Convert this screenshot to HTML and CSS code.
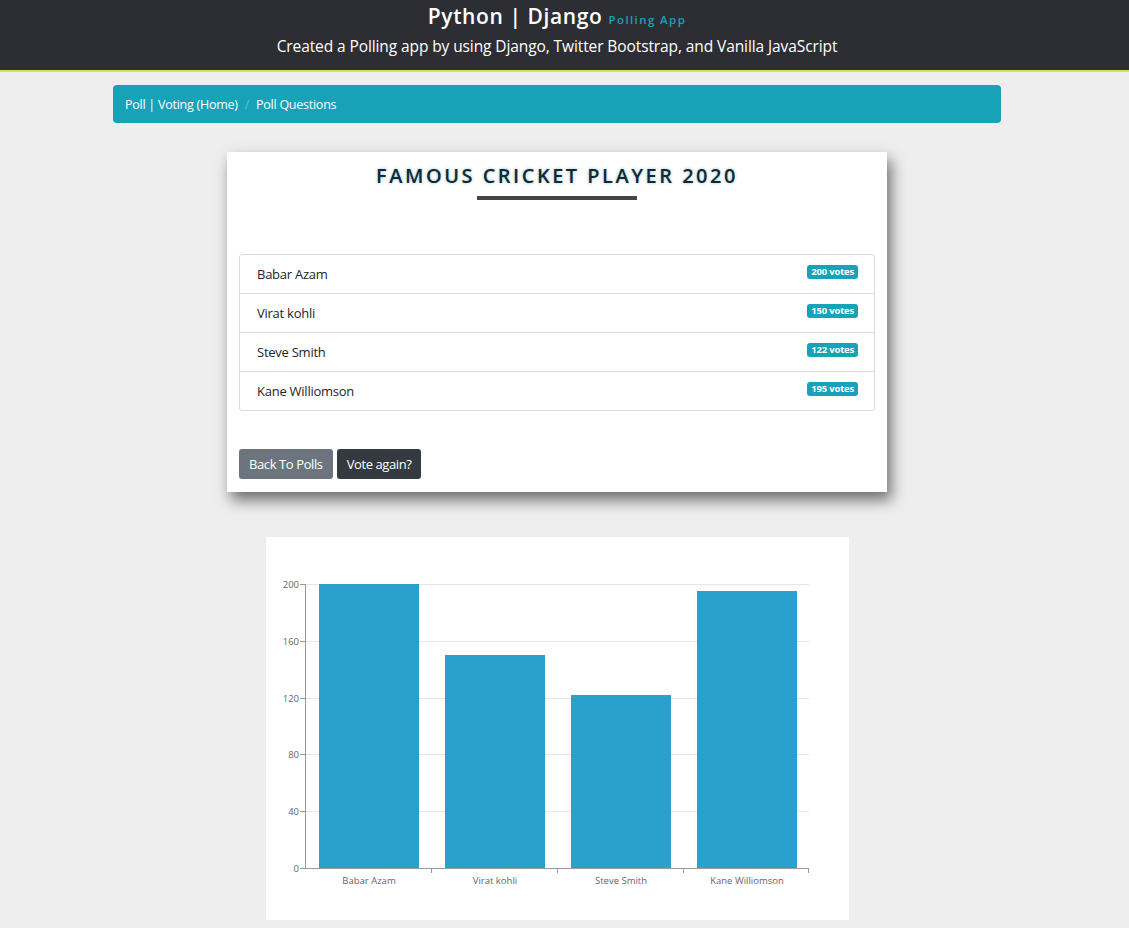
FILE: index.html
```html
<!DOCTYPE html>
<html>
<head>
<meta charset="utf-8">
<title>Polling App</title>
<link rel="stylesheet" href="styles.css">
</head>
<body>
<header class="site-header">
  <h1 class="brand">Python | Django <span class="brand-sub">Polling App</span></h1>
  <p class="tagline">Created a Polling app by using Django, Twitter Bootstrap, and Vanilla JavaScript</p>
</header>

<div class="page">
<main class="container">
  <nav class="breadcrumb">
    <a class="crumb" href="#">Poll | Voting (Home)</a>
    <span class="sep">/</span>
    <a class="crumb" href="#">Poll Questions</a>
  </nav>

  <section class="poll-card">
    <h2 class="poll-title">Famous Cricket Player 2020</h2>
    <div class="title-bar"></div>
    <ul class="list-group">
      <li class="list-item"><span>Babar Azam</span><span class="badge">200 votes</span></li>
      <li class="list-item"><span>Virat kohli</span><span class="badge">150 votes</span></li>
      <li class="list-item"><span>Steve Smith</span><span class="badge">122 votes</span></li>
      <li class="list-item"><span>Kane Williomson</span><span class="badge">195 votes</span></li>
    </ul>
    <div class="actions">
      <a class="btn btn-secondary" href="#">Back To Polls</a>
      <a class="btn btn-dark" href="#">Vote again?</a>
    </div>
  </section>

  <section class="chart-box">
    <svg class="chart" width="583" height="383" viewBox="0 0 583 383">
      <g class="grid">
        <line x1="39" y1="47.5" x2="543" y2="47.5"/>
        <line x1="39" y1="104.5" x2="543" y2="104.5"/>
        <line x1="39" y1="161.5" x2="543" y2="161.5"/>
        <line x1="39" y1="217.5" x2="543" y2="217.5"/>
        <line x1="39" y1="274.5" x2="543" y2="274.5"/>
      </g>
      <g class="bars">
        <rect x="53" y="47" width="100" height="284"/>
        <rect x="179" y="118" width="100" height="213"/>
        <rect x="305" y="158" width="100" height="173"/>
        <rect x="431" y="54" width="100" height="277"/>
      </g>
      <g class="axis">
        <line x1="39.5" y1="47" x2="39.5" y2="331"/>
        <line x1="39" y1="331.5" x2="543" y2="331.5"/>
        <line x1="34" y1="47.5" x2="39" y2="47.5"/>
        <line x1="34" y1="104.5" x2="39" y2="104.5"/>
        <line x1="34" y1="161.5" x2="39" y2="161.5"/>
        <line x1="34" y1="217.5" x2="39" y2="217.5"/>
        <line x1="34" y1="274.5" x2="39" y2="274.5"/>
        <line x1="34" y1="331.5" x2="39" y2="331.5"/>
        <line x1="165.5" y1="331" x2="165.5" y2="336"/>
        <line x1="291.5" y1="331" x2="291.5" y2="336"/>
        <line x1="417.5" y1="331" x2="417.5" y2="336"/>
        <line x1="542.5" y1="331" x2="542.5" y2="336"/>
      </g>
      <g class="ylabels">
        <text x="33" y="51">200</text>
        <text x="33" y="108">160</text>
        <text x="33" y="165">120</text>
        <text x="33" y="221">80</text>
        <text x="33" y="278">40</text>
        <text x="33" y="335">0</text>
      </g>
      <g class="xlabels">
        <text x="103" y="347">Babar Azam</text>
        <text x="229" y="347">Virat kohli</text>
        <text x="355" y="347">Steve Smith</text>
        <text x="481" y="347">Kane Williomson</text>
      </g>
    </svg>
  </section>
</main>
</div>
</body>
</html>
```

FILE: styles.css
```css
* { box-sizing: border-box; }

body {
  margin: 0;
  background: #eeeeee;
  font-family: "Open Sans", "Noto Sans", sans-serif;
  color: #212529;
}

.page {
  padding-right: 15px;
}

.site-header {
  background: #2d2e33;
  border-bottom: 2px solid #d8e24a;
  height: 72px;
  padding: 2px 15px 0 0;
  text-align: center;
  color: #fff;
}

.brand {
  margin: 0;
  font-size: 21px;
  font-weight: 600;
  letter-spacing: 0.6px;
  line-height: 28px;
}

.brand-sub {
  font-size: 11.5px;
  color: #17a2b8;
  letter-spacing: 1.4px;
  font-weight: 600;
}

.tagline {
  margin: 1px 0 0;
  font-size: 15.5px;
  line-height: 22px;
  letter-spacing: -0.1px;
}

.container {
  width: 888px;
  margin: 13px auto 0;
  display: flex;
  flex-direction: column;
  align-items: center;
}

.breadcrumb {
  align-self: stretch;
  height: 38px;
  background: #17a2b8;
  border-radius: 4px;
  display: flex;
  align-items: center;
  padding: 0 12px;
  font-size: 12.5px;
  letter-spacing: -0.25px;
}

.crumb { color: #fff; text-decoration: none; }

.sep {
  color: rgba(255,255,255,0.35);
  padding: 0 7px;
}

.poll-card {
  width: 660px;
  margin-top: 29px;
  background: #fff;
  box-shadow: 4px 8px 14px rgba(0,0,0,0.55);
  padding: 10px 12px 13px;
  display: flex;
  flex-direction: column;
}

.poll-title {
  margin: 0;
  text-align: center;
  text-transform: uppercase;
  font-size: 20px;
  font-weight: 600;
  letter-spacing: 2.5px;
  color: #0e2a36;
  line-height: 28px;
  text-shadow: 0 0 3px rgba(40,120,130,0.5);
}

.title-bar {
  width: 160px;
  height: 4px;
  background: #444;
  margin: 6px auto 0;
}

.list-group {
  list-style: none;
  margin: 54px 0 0;
  padding: 0;
  border: 1px solid #dcdcdc;
  border-radius: 3px;
}

.list-item {
  height: 39px;
  display: flex;
  justify-content: space-between;
  align-items: flex-start;
  padding: 10px 16px 0 17px;
  font-size: 13px;
  letter-spacing: -0.25px;
  border-top: 1px solid #dcdcdc;
}

.list-item:first-child { border-top: none; height: 38px; }

.badge {
  background: #17a2b8;
  color: #fff;
  font-size: 9.5px;
  font-weight: 700;
  padding: 1px 4px;
  border-radius: 3px;
  line-height: 12px;
  letter-spacing: -0.2px;
}

.actions {
  display: flex;
  gap: 4px;
  margin-top: 38px;
}

.btn {
  display: inline-flex;
  align-items: center;
  height: 30px;
  padding: 0 10px;
  border-radius: 3px;
  color: #fff;
  text-decoration: none;
  font-size: 13px;
  letter-spacing: -0.4px;
}

.btn-secondary { background: #6c757d; }
.btn-dark { background: #343a40; padding: 0 10px; }

.chart-box {
  width: 583px;
  height: 383px;
  margin-top: 45px;
  background: #fff;
}

.chart { display: block; }

.grid line { stroke: #e6e6e6; stroke-width: 1; }
.bars rect { fill: #2aa1cc; }
.axis line { stroke: #999; stroke-width: 1; }

.ylabels text {
  font-family: "Open Sans", sans-serif;
  font-size: 9.5px;
  fill: #666;
  text-anchor: end;
}

.xlabels text {
  font-family: "Open Sans", sans-serif;
  font-size: 9.5px;
  fill: #666;
  text-anchor: middle;
}
```
